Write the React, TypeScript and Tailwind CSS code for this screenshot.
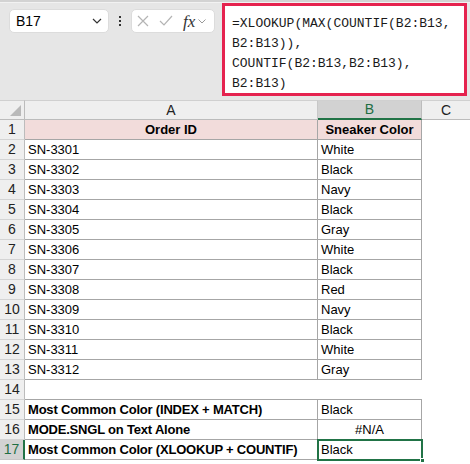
import React from "react";

const rows: [string, string][] = [
  ["SN-3301", "White"],
  ["SN-3302", "Black"],
  ["SN-3303", "Navy"],
  ["SN-3304", "Black"],
  ["SN-3305", "Gray"],
  ["SN-3306", "White"],
  ["SN-3307", "Black"],
  ["SN-3308", "Red"],
  ["SN-3309", "Navy"],
  ["SN-3310", "Black"],
  ["SN-3311", "White"],
  ["SN-3312", "Gray"],
];

function RowHead({ n, sel }: { n: number; sel?: boolean }) {
  return (
    <div
      className={
        sel
          ? "h-[20px] flex items-center justify-center text-[14px] bg-[#d2d2d2] text-[#1e6e42] border-b border-[#c6c6c6] border-r-2 border-r-[#217346]"
          : "h-[20px] flex items-center justify-center text-[14px] bg-[#efefef] text-[#222] border-b border-[#d4d4d4] border-r border-r-[#bcbcbc]"
      }
    >
      {n}
    </div>
  );
}

export default function App() {
  return (
    <div
      className="w-[470px] h-[464px] bg-white overflow-hidden text-black"
      style={{ fontFamily: "'Liberation Sans', Arial, sans-serif" }}
    >
      {/* top bar */}
      <div className="h-[100px] bg-[#e6e6e6] relative flex flex-col">
        <div className="h-[3px] bg-[#d3d3d3] border-b border-[#f2f2f2]" />
        <div className="flex items-start pt-[6px] pl-[9px]">
          <div className="w-[100px] h-[24px] bg-white rounded-[5px] border border-[#dcdcdc] flex items-center justify-between pl-[6px] pr-[6px] text-[14px]">
            <span>B17</span>
            <svg width="10" height="6" viewBox="0 0 10 6">
              <path d="M1 1 L5 5 L9 1" stroke="#333" strokeWidth="1.2" fill="none" />
            </svg>
          </div>
          <div className="w-[22px] h-[24px] flex flex-col items-center justify-center gap-[2px]">
            <div className="w-[2px] h-[2px] bg-[#333]" />
            <div className="w-[2px] h-[2px] bg-[#333]" />
            <div className="w-[2px] h-[2px] bg-[#333]" />
          </div>
          <div className="w-[84px] h-[24px] bg-white rounded-[5px] border border-[#dcdcdc] flex items-center pl-[5px] gap-[10px]">
            <svg width="12" height="12" viewBox="0 0 12 12">
              <path d="M1 1 L11 11 M11 1 L1 11" stroke="#b4b4b4" strokeWidth="1.2" fill="none" />
            </svg>
            <svg width="14" height="12" viewBox="0 0 14 12">
              <path d="M1 6 L5 10 L13 1" stroke="#b4b4b4" strokeWidth="1.2" fill="none" />
            </svg>
            <div className="flex items-center gap-[3px]">
              <span
                className="italic text-[17px] text-[#333] leading-none"
                style={{ fontFamily: "'Liberation Serif', 'Times New Roman', serif" }}
              >
                fx
              </span>
              <svg width="8" height="5" viewBox="0 0 8 5">
                <path d="M0.5 0.5 L4 4 L7.5 0.5" stroke="#999" strokeWidth="1" fill="none" />
              </svg>
            </div>
          </div>
        </div>
        <div
          className="absolute left-[222px] top-[3px] w-[245px] h-[93px] bg-white border-[3px] border-[#e5234f] pl-[7px] pt-[8px] text-[13px] leading-[20px] text-[#1a1a1a]"
          style={{ fontFamily: "'Liberation Mono', 'Courier New', monospace" }}
        >
          <div>=XLOOKUP(MAX(COUNTIF(B2:B13,</div>
          <div>B2:B13)),</div>
          <div>COUNTIF(B2:B13,B2:B13),</div>
          <div>B2:B13)</div>
        </div>
      </div>

      {/* sheet */}
      <div className="grid grid-cols-[25px_293px_104px_48px] text-[13px]">
        {/* column headers */}
        <div className="h-[20px] bg-[#efefef] border-t border-[#d0d0d0] border-r border-r-[#bcbcbc] border-b border-b-[#bcbcbc] relative">
          <svg className="absolute right-[3px] bottom-[3px]" width="11" height="11" viewBox="0 0 11 11">
            <path d="M11 0 L11 11 L0 11 Z" fill="#b9b9b9" />
          </svg>
        </div>
        <div className="h-[20px] text-[14px] bg-[#efefef] border-t border-[#d0d0d0] border-r border-r-[#c8c8c8] border-b border-b-[#bcbcbc] flex items-center justify-center text-[#222]">
          A
        </div>
        <div className="h-[20px] text-[14px] bg-[#d2d2d2] border-t border-[#d0d0d0] border-r border-r-[#bcbcbc] border-b-2 border-b-[#217346] flex items-center justify-center text-[#1e6e42]">
          B
        </div>
        <div className="h-[20px] text-[14px] bg-[#efefef] border-t border-[#d0d0d0] border-b border-b-[#bcbcbc] flex items-center justify-center text-[#222]">
          C
        </div>

        {/* row 1 */}
        <RowHead n={1} />
        <div className="h-[20px] bg-[#f2dcdb] border-r border-b border-[#a6a6a6] flex items-center justify-center font-bold">
          Order ID
        </div>
        <div className="h-[20px] bg-[#f2dcdb] border-r border-b border-[#a6a6a6] flex items-center justify-center font-bold">
          Sneaker Color
        </div>
        <div className="h-[20px]" />

        {rows.map(([a, b], i) => (
          <React.Fragment key={a}>
            <RowHead n={i + 2} />
            <div className="h-[20px] border-r border-b border-[#a6a6a6] flex items-center pl-[3px]">{a}</div>
            <div className="h-[20px] border-r border-b border-[#a6a6a6] flex items-center pl-[3px]">{b}</div>
            <div className="h-[20px]" />
          </React.Fragment>
        ))}

        {/* row 14 */}
        <RowHead n={14} />
        <div className="h-[20px] border-b border-[#a6a6a6]" />
        <div className="h-[20px] border-b border-[#a6a6a6]" />
        <div className="h-[20px]" />

        {/* row 15 */}
        <RowHead n={15} />
        <div className="h-[20px] border-r border-b border-[#a6a6a6] flex items-center pl-[3px] font-bold tracking-[-0.2px]">
          Most Common Color (INDEX + MATCH)
        </div>
        <div className="h-[20px] border-r border-b border-[#a6a6a6] flex items-center pl-[3px]">Black</div>
        <div className="h-[20px]" />

        {/* row 16 */}
        <RowHead n={16} />
        <div className="h-[20px] border-r border-b border-[#a6a6a6] flex items-center pl-[3px] font-bold tracking-[-0.2px]">
          MODE.SNGL on Text Alone
        </div>
        <div className="h-[20px] border-r border-b border-[#a6a6a6] flex items-center justify-center">#N/A</div>
        <div className="h-[20px]" />

        {/* row 17 */}
        <RowHead n={17} sel />
        <div className="h-[20px] border-b border-[#a6a6a6] flex items-center pl-[3px] font-bold tracking-[-0.2px]">
          Most Common Color (XLOOKUP + COUNTIF)
        </div>
        <div className="h-[20px] relative flex items-center pl-[3px]">
          <div className="absolute left-[-1px] top-[-1px] right-[-1px] bottom-[-1px] border-2 border-[#217346]" />
          <div className="absolute right-[-3px] bottom-[-3px] w-[5px] h-[5px] bg-[#217346] border border-white" />
          Black
        </div>
        <div className="h-[20px]" />
      </div>
    </div>
  );
}
